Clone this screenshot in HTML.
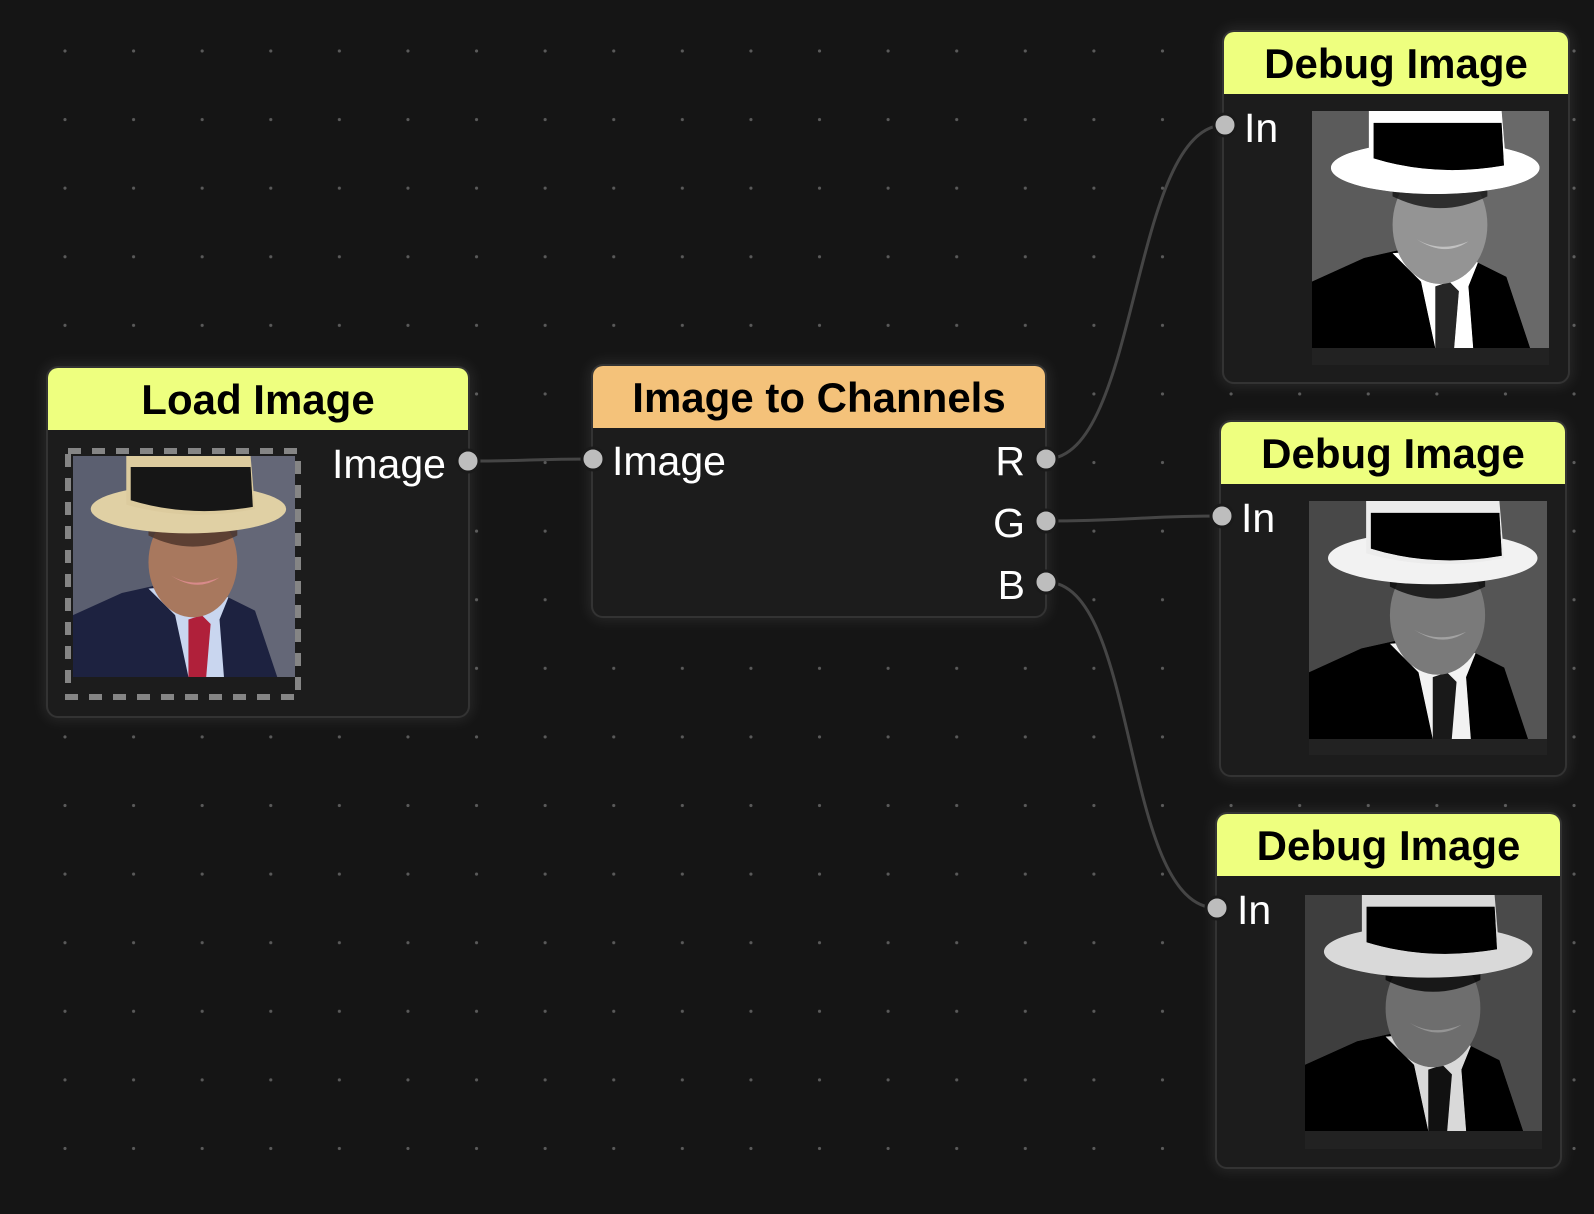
<!DOCTYPE html>
<html><head><meta charset="utf-8">
<style>
html,body{margin:0;padding:0;}
body{width:1594px;height:1214px;overflow:hidden;position:relative;background-color:#151515;
background-image:radial-gradient(circle,#5a5a5a 1.4px,transparent 1.8px);
background-size:68.6px 68.6px;background-position:30.7px 16.7px;
font-family:"Liberation Sans",sans-serif;}
.node{position:absolute;background:#1c1c1c;border:2px solid #333;border-radius:12px;
box-shadow:0 0 14px 3px rgba(255,255,255,0.08);overflow:hidden;box-sizing:border-box;}
.hdr{height:62px;background:#eeff7f;color:#000;font-weight:bold;font-size:42px;text-align:center;line-height:64px;}
.hdr.o{background:#f4c27a;}
.lbl{position:absolute;color:#fff;font-size:41px;line-height:40px;}
.img{position:absolute;}
.strip{position:absolute;background:#222;}
svg.w{position:absolute;left:0;top:0;}
</style></head><body>
<svg width="0" height="0" style="position:absolute">
<defs>
<symbol id="man" viewBox="0 0 100 100" preserveAspectRatio="none">
<rect width="100" height="100" fill="#5b5f70"/>
<rect x="60" width="40" height="100" fill="#6a6d7c" opacity="0.6"/>
<path d="M0 72 L22 62 L40 58 L62 60 L82 70 L92 100 L0 100Z" fill="#1d2240"/>
<path d="M34 60 L46 72 L52 100 L68 100 L66 74 L70 64 L58 58Z" fill="#c9d6ef"/>
<path d="M52 74 L58 72 L62 76 L60 100 L52 100Z" fill="#b0203a"/>
<ellipse cx="54" cy="48" rx="20" ry="25" fill="#a8785e"/>
<path d="M34 36 Q54 46 74 36 L74 28 L34 28Z" fill="#4a3228" opacity="0.8"/>
<path d="M44 54 Q54 60 66 55 Q56 62 44 54Z" fill="#d88a8a"/>
<ellipse cx="52" cy="24" rx="44" ry="11" fill="#e0d0a4"/>
<path d="M24 0 L80 0 L82 24 Q52 30 24 22Z" fill="#dccb9e"/>
<path d="M26 5 L80 5 L81 23 Q52 28 26 20Z" fill="#161616"/>
</symbol>
</defs>
</svg>

<svg class="w" width="1594" height="1214">
<g fill="none" stroke="#454545" stroke-width="3">
<path d="M468 461 C530 461 530 459 593 459"/>
<path d="M1046 459 C1140 459 1130 125 1225 125"/>
<path d="M1046 521 C1130 521 1140 516 1222 516"/>
<path d="M1046 582 C1140 582 1120 908 1217 908"/>
</g>
</svg>

<div class="node" style="left:46px;top:366px;width:424px;height:352px;">
<div class="hdr">Load Image</div>
<svg style="position:absolute;left:17px;top:80px;" width="236" height="252">
<rect x="3" y="3" width="230" height="246" fill="none" stroke="#858585" stroke-width="6" stroke-dasharray="13 11"/>
</svg>
<svg class="img" style="left:25px;top:88px;" width="222" height="221"><use href="#man" width="222" height="221"/></svg>
<div class="lbl" style="left:284px;top:76px;">Image</div>
</div>

<div class="node" style="left:591px;top:364px;width:456px;height:254px;">
<div class="hdr o">Image to Channels</div>
<div class="lbl" style="left:19px;top:75px;">Image</div>
<div class="lbl" style="right:20px;top:75px;">R</div>
<div class="lbl" style="right:20px;top:137px;">G</div>
<div class="lbl" style="right:20px;top:199px;">B</div>
</div>

<div class="node" style="left:1222px;top:30px;width:348px;height:354px;">
<div class="hdr">Debug Image</div>
<div class="lbl" style="left:20px;top:76px;">In</div>
<div class="strip" style="left:88px;top:79px;width:237px;height:254px;"></div>
<svg class="img" style="left:88px;top:79px;filter:grayscale(1) contrast(1.5) brightness(1.15);" width="237" height="237"><use href="#man" width="237" height="237"/></svg>
</div>

<div class="node" style="left:1219px;top:420px;width:348px;height:357px;">
<div class="hdr">Debug Image</div>
<div class="lbl" style="left:20px;top:76px;">In</div>
<div class="strip" style="left:88px;top:79px;width:238px;height:254px;"></div>
<svg class="img" style="left:88px;top:79px;filter:grayscale(1) contrast(1.6) brightness(0.95);" width="238" height="238"><use href="#man" width="238" height="238"/></svg>
</div>

<div class="node" style="left:1215px;top:812px;width:347px;height:357px;">
<div class="hdr">Debug Image</div>
<div class="lbl" style="left:20px;top:76px;">In</div>
<div class="strip" style="left:88px;top:81px;width:237px;height:254px;"></div>
<svg class="img" style="left:88px;top:81px;filter:grayscale(1) contrast(1.7) brightness(0.85);" width="237" height="236"><use href="#man" width="237" height="236"/></svg>
</div>

<svg class="w" width="1594" height="1214">
<g fill="#bdbdbd" stroke="#1a1a1a" stroke-width="3">
<circle cx="468" cy="461" r="11"/>
<circle cx="593" cy="459" r="11"/>
<circle cx="1046" cy="459" r="11"/>
<circle cx="1046" cy="521" r="11"/>
<circle cx="1046" cy="582" r="11"/>
<circle cx="1225" cy="125" r="11"/>
<circle cx="1222" cy="516" r="11"/>
<circle cx="1217" cy="908" r="11"/>
</g>
</svg>
</body></html>
